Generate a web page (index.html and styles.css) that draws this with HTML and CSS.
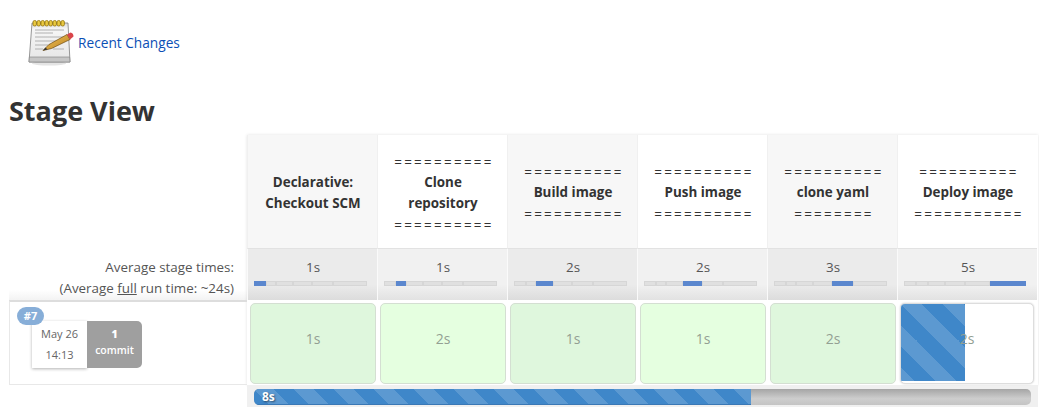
FILE: index.html
```html
<!DOCTYPE html>
<html lang="en">

<head>
    <meta charset="UTF-8">
    <title>Stage View</title>
    <link rel="stylesheet" href="styles.css">
</head>

<body>
    <!-- recent changes link -->
    <div class="changes">
        <svg class="note" width="48" height="47" viewBox="0 0 48 47">
            <defs>
                <linearGradient id="paper" x1="0" y1="0" x2="0" y2="1">
                    <stop offset="0" stop-color="#d8d8d8" />
                    <stop offset="0.15" stop-color="#f6f6f6" />
                    <stop offset="1" stop-color="#e6e6e6" />
                </linearGradient>
                <linearGradient id="pencil" x1="0" y1="0" x2="1" y2="1">
                    <stop offset="0" stop-color="#f3c65c" />
                    <stop offset="1" stop-color="#b9801f" />
                </linearGradient>
            </defs>
            <ellipse cx="22" cy="44.500" rx="17" ry="2" fill="#e4e4e4" />
            <path d="M5 4 H41 L43 43 H2 Z" fill="url(#paper)" stroke="#7d7d7d" stroke-width="0.8" />
            <path d="M2.400 38 H42.600 L43 43 H2 Z" fill="#c6c6c6" stroke="#7d7d7d" stroke-width="0.6" />
            <path d="M8 11 H37 M8 14 H26 M8 18 H37 M8 22 H30 M8 26 H23 M8 30 H16 M26 30 H37" stroke="#b0b0b0" stroke-width="1" />
            <g fill="#e9c840" stroke="#8a6a00" stroke-width="0.7">
                <rect x="6" y="1.500" width="3.400" height="5.500" rx="1.500" />
                <rect x="10" y="1.500" width="3.400" height="5.500" rx="1.500" />
                <rect x="14" y="1.500" width="3.400" height="5.500" rx="1.500" />
                <rect x="18" y="1.500" width="3.400" height="5.500" rx="1.500" />
                <rect x="22" y="1.500" width="3.400" height="5.500" rx="1.500" />
                <rect x="26" y="1.500" width="3.400" height="5.500" rx="1.500" />
                <rect x="30" y="1.500" width="3.400" height="5.500" rx="1.500" />
                <rect x="34" y="1.500" width="3.400" height="5.500" rx="1.500" />
            </g>
            <path d="M16 31.500 L22 25.500 L40 15.500 L43 20.500 L24.500 29.500 Z" fill="url(#pencil)" stroke="#6f4a10" stroke-width="0.7" />
            <path d="M16 31.500 L18.500 28.500 L20.500 30.500 Z" fill="#333" />
            <path d="M40 15.500 L43.500 13.500 Q46.500 14 46.500 17.500 L43 20.500 Z" fill="#d9454a" />
        </svg>
        <a class="changes-link" href="#">Recent Changes</a>
    </div>

    <h2 class="title">Stage View</h2>

    <section class="stage">
        <!-- left column -->
        <div class="side">
            <div class="side-head"></div>
            <div class="side-avg">
                <div>Average stage times:</div>
                <div>(Average <u>full</u> run time: ~24s)</div>
            </div>
            <div class="side-build">
                <span class="badge">#7</span>
                <div class="date">
                    <span>May 26</span>
                    <span>14:13</span>
                </div>
                <div class="commit">
                    <b>1</b>
                    <span>commit</span>
                </div>
            </div>
            <div class="side-foot"></div>
        </div>

        <!-- stages -->
        <div class="main">
            <div class="cols">
                <div class="col odd">
                    <div class="head"><b>Declarative:<br>Checkout SCM</b></div>
                    <div class="avg">
                        <div class="time">1s</div>
                        <div class="bar">
                            <i class="on" style="width:12px"></i><i style="width:10px"></i><i style="width:17px"></i><i style="width:19px"></i><i style="width:21px"></i><i style="width:34px"></i>
                        </div>
                    </div>
                    <div class="cell"><div class="box">1s</div></div>
                </div>
                <div class="col">
                    <div class="head"><span>==========</span><b>Clone<br>repository</b><span>==========</span></div>
                    <div class="avg">
                        <div class="time">1s</div>
                        <div class="bar">
                            <i style="width:12px"></i><i class="on" style="width:10px"></i><i style="width:17px"></i><i style="width:19px"></i><i style="width:21px"></i><i style="width:34px"></i>
                        </div>
                    </div>
                    <div class="cell"><div class="box">2s</div></div>
                </div>
                <div class="col odd">
                    <div class="head"><span>==========</span><b>Build image</b><span>==========</span></div>
                    <div class="avg">
                        <div class="time">2s</div>
                        <div class="bar">
                            <i style="width:12px"></i><i style="width:10px"></i><i class="on" style="width:17px"></i><i style="width:19px"></i><i style="width:21px"></i><i style="width:34px"></i>
                        </div>
                    </div>
                    <div class="cell"><div class="box">1s</div></div>
                </div>
                <div class="col">
                    <div class="head"><span>==========</span><b>Push image</b><span>==========</span></div>
                    <div class="avg">
                        <div class="time">2s</div>
                        <div class="bar">
                            <i style="width:12px"></i><i style="width:10px"></i><i style="width:17px"></i><i class="on" style="width:19px"></i><i style="width:21px"></i><i style="width:34px"></i>
                        </div>
                    </div>
                    <div class="cell"><div class="box">1s</div></div>
                </div>
                <div class="col odd">
                    <div class="head"><span>==========</span><b>clone yaml</b><span>========</span></div>
                    <div class="avg">
                        <div class="time">3s</div>
                        <div class="bar">
                            <i style="width:12px"></i><i style="width:10px"></i><i style="width:17px"></i><i style="width:19px"></i><i class="on" style="width:21px"></i><i style="width:34px"></i>
                        </div>
                    </div>
                    <div class="cell"><div class="box">2s</div></div>
                </div>
                <div class="col wide">
                    <div class="head"><span>==========</span><b>Deploy image</b><span>===========</span></div>
                    <div class="avg">
                        <div class="time">5s</div>
                        <div class="bar">
                            <i style="width:12px"></i><i style="width:12px"></i><i style="width:17px"></i><i style="width:20px"></i><i style="width:25px"></i><i class="on" style="width:36px"></i>
                        </div>
                    </div>
                    <div class="cell"><div class="box running"><div class="fill"></div><span>2s</span></div></div>
                </div>
            </div>
            <!-- overall progress -->
            <div class="total">
                <div class="total-bar">
                    <div class="total-fill">8s</div>
                </div>
            </div>
        </div>
    </section>
</body>

</html>
```

FILE: styles.css
```css
* {
    margin: 0;
    padding: 0;
    box-sizing: border-box;
}

body {
    height: 407px;
    overflow: hidden;
    background-color: #fff;
    color: #333;
    font-family: "Open Sans", "Noto Sans", sans-serif;
    font-size: 13.4px;
}

.changes {
    display: flex;
    align-items: center;
    gap: 3px;
    padding: 19px 0 0 27px;
    height: 66px;
}

.changes-link {
    color: #0b4fb5;
    text-decoration: none;
    font-size: 13.7px;
    margin-top: -1px;
}

.title {
    padding: 27px 0 0 9px;
    height: 69px;
    font-size: 27px;
    line-height: 36px;
    font-weight: 700;
}

.stage {
    display: flex;
    padding-left: 9px;
}

/* left column */
.side {
    width: 238px;
    flex: none;
}

.side-head {
    height: 114px;
}

.side-avg {
    height: 51px;
    padding: 8px 13px 0 0;
    text-align: right;
    line-height: 21px;
    color: #555;
    background: linear-gradient(#fff 80%, #f3f3f3);
}

.side-build {
    position: relative;
    display: flex;
    height: 85px;
    padding: 19px 0 0 22px;
    border: 1px solid #e8e8e8;
    border-top: 2px solid #ddd;
    border-right: 0;
}

.badge {
    position: absolute;
    left: 7px;
    top: 5px;
    width: 27px;
    height: 18px;
    border-radius: 9px;
    background-color: #87aed8;
    color: #fff;
    font-size: 11px;
    font-weight: 700;
    line-height: 18px;
    text-align: center;
}

.date {
    display: flex;
    flex-direction: column;
    align-items: center;
    justify-content: center;
    width: 55px;
    height: 47px;
    padding-bottom: 2px;
    background-color: #fff;
    box-shadow: 0 1px 3px rgba(0, 0, 0, .3);
    font-size: 11px;
    line-height: 21px;
    color: #666;
}

.commit {
    display: flex;
    flex-direction: column;
    align-items: center;
    justify-content: center;
    width: 55px;
    height: 47px;
    padding-bottom: 5px;
    border-radius: 0 5px 5px 0;
    background-color: #9f9f9f;
    color: #fff;
    font-size: 10.5px;
    font-weight: 600;
    line-height: 16px;
}

.side-foot {
    height: 23px;
    border-bottom: 1px solid #ddd;
}

/* stage columns */
.main {
    flex: 1;
    margin-right: 1px;
}

.cols {
    display: flex;
    box-shadow: 0 0 3px rgba(0, 0, 0, .12);
}

.col {
    width: 130px;
    flex: none;
}

.wide {
    width: 140px;
}

.head {
    display: flex;
    flex-direction: column;
    justify-content: center;
    align-items: center;
    height: 114px;
    padding: 2px 0 0 1px;
    text-align: center;
    line-height: 21px;
    background-color: #fff;
    border-left: 1px solid #f0f0f0;
    border-bottom: 1px solid #e2e2e2;
}

.head span {
    letter-spacing: 2.3px;
    padding-left: 2px;
    transform: translateY(1px);
}

.odd .head {
    background-color: #f7f7f7;
}

.avg {
    height: 51px;
    padding: 9px 5px 0 6px;
    background: linear-gradient(#f1f1f1 70%, #e2e2e2);
    border-left: 1px solid #fafafa;
    text-align: center;
}

.odd .avg {
    background: linear-gradient(#ebebeb 70%, #dcdcdc);
}

.time {
    line-height: 18px;
    color: #555;
}

.bar {
    display: flex;
    height: 5px;
    margin-top: 5px;
}

.bar i {
    display: block;
    height: 5px;
    flex: none;
    background-color: #e0e0e0;
    border: 1px solid #d6d6d6;
}

.bar .on {
    background-color: #5b87ce;
    border: 0;
}

.cell {
    height: 85px;
    padding: 3px 1px 1px 3px;
    background-color: #fff;
}

.box {
    height: 100%;
    border: 1px solid #d4dfd2;
    border-radius: 5px;
    background-color: #e5ffe0;
    color: #939f93;
    font-size: 14px;
    line-height: 69px;
    text-align: center;
}

.odd .box {
    background-color: #dff7dd;
}

.wide .cell {
    padding: 3px 3px 1px 3px;
}

.running {
    position: relative;
    overflow: hidden;
    border-color: #ddd;
    background-color: #fff;
    box-shadow: 0 0 2px rgba(0, 0, 0, .2);
}

.fill {
    width: 64px;
    height: 98%;
    background-color: #3f87c9;
    background-image: linear-gradient(45deg, rgba(255, 255, 255, .15) 25%, transparent 25%, transparent 50%, rgba(255, 255, 255, .15) 50%, rgba(255, 255, 255, .15) 75%, transparent 75%, transparent);
    background-size: 42px 42px;
}

.running span {
    position: absolute;
    left: 0;
    right: 0;
    top: 0;
}

/* total progress */
.total {
    height: 23px;
    padding: 4px 7px 2px 7px;
    border-bottom: 1px solid #ddd;
    background-color: #f0f0f0;
}

.total-bar {
    height: 16px;
    border-radius: 5px;
    background: linear-gradient(#a5a5a5, #cdcdcd 60%, #c4c4c4);
    overflow: hidden;
}

.total-fill {
    width: 497px;
    height: 100%;
    padding-left: 8px;
    color: #fff;
    font-size: 12px;
    font-weight: 700;
    line-height: 16px;
    text-shadow: 1px 1px 2px rgba(0, 0, 0, .5);
    border-bottom: 1px solid #3a78b5;
    background-color: #3f87c9;
    background-image: linear-gradient(45deg, rgba(255, 255, 255, .15) 25%, transparent 25%, transparent 50%, rgba(255, 255, 255, .15) 50%, rgba(255, 255, 255, .15) 75%, transparent 75%, transparent);
    background-size: 40px 40px;
}
```
